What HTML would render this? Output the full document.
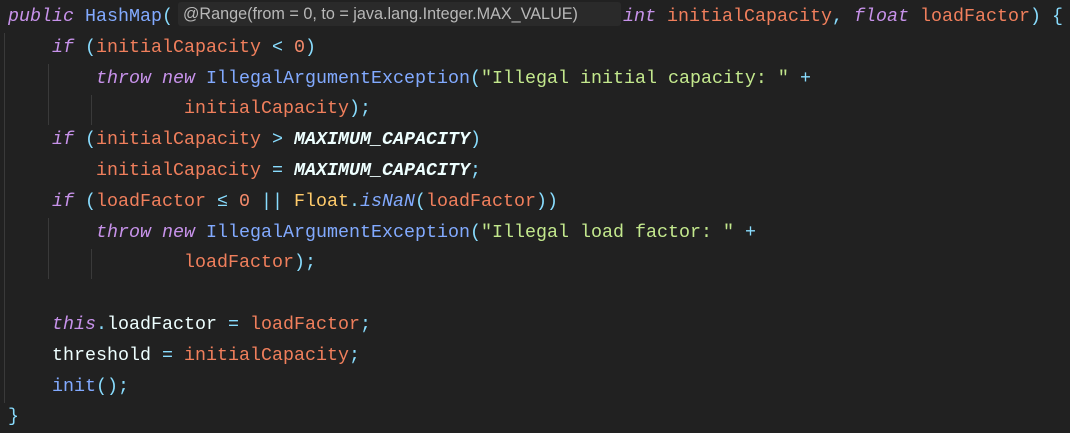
<!DOCTYPE html>
<html><head><style>
body{margin:0;background:#212121;width:1070px;height:430px;overflow:hidden;position:relative}
.code{position:absolute;left:8px;top:2px;font-family:"Liberation Mono",monospace;font-size:18.33px;line-height:30.8px;color:#eeffff;white-space:pre}
.k{color:#c792ea;font-style:italic}
.c{color:#82aaff}
.p{color:#89ddff}
.v{color:#f07f5c}
.o{color:#f78c6c}
.s{color:#c3e88d}
.y{color:#ffcb6b}
.m{color:#eeffff;font-style:italic;font-weight:bold}
.fi{color:#82aaff;font-style:italic}
.hint{display:inline-block;width:443px;height:24px;line-height:24px;vertical-align:middle;background:#2a2a2a;color:#b8b8b8;font-family:"Liberation Sans",sans-serif;font-size:16.2px;padding-left:5px;box-sizing:border-box;border-radius:3px;margin:0 2px 0 5px;position:relative;top:-2px}
.g{position:absolute;width:1px;background:#3a3a3a}
</style></head><body>
<div class="g" style="left:4px;top:33px;height:370px"></div>
<div class="g" style="left:48px;top:64px;height:61px"></div>
<div class="g" style="left:91px;top:95px;height:30px"></div>
<div class="g" style="left:48px;top:218px;height:61px"></div>
<div class="g" style="left:91px;top:249px;height:30px"></div>
<div class="code"><span class="k">public</span> <span class="c">HashMap</span><span class="p">(</span><span class="hint">@Range(from = 0, to = java.lang.Integer.MAX_VALUE)</span><span class="k">int</span> <span class="v">initialCapacity</span><span class="p">,</span> <span class="k">float</span> <span class="v">loadFactor</span><span class="p">)</span> <span class="p">{</span>
    <span class="k">if</span> <span class="p">(</span><span class="v">initialCapacity</span> <span class="p">&lt;</span> <span class="o">0</span><span class="p">)</span>
        <span class="k">throw</span> <span class="k">new</span> <span class="c">IllegalArgumentException</span><span class="p">(</span><span class="s">"Illegal initial capacity: "</span> <span class="p">+</span>
                <span class="v">initialCapacity</span><span class="p">);</span>
    <span class="k">if</span> <span class="p">(</span><span class="v">initialCapacity</span> <span class="p">&gt;</span> <span class="m">MAXIMUM_CAPACITY</span><span class="p">)</span>
        <span class="v">initialCapacity</span> <span class="p">=</span> <span class="m">MAXIMUM_CAPACITY</span><span class="p">;</span>
    <span class="k">if</span> <span class="p">(</span><span class="v">loadFactor</span> <span class="p">≤</span> <span class="o">0</span> <span class="p">||</span> <span class="y">Float</span><span class="p">.</span><span class="fi">isNaN</span><span class="p">(</span><span class="v">loadFactor</span><span class="p">))</span>
        <span class="k">throw</span> <span class="k">new</span> <span class="c">IllegalArgumentException</span><span class="p">(</span><span class="s">"Illegal load factor: "</span> <span class="p">+</span>
                <span class="v">loadFactor</span><span class="p">);</span>

    <span class="k">this</span><span class="p">.</span>loadFactor <span class="p">=</span> <span class="v">loadFactor</span><span class="p">;</span>
    threshold <span class="p">=</span> <span class="v">initialCapacity</span><span class="p">;</span>
    <span class="c">init</span><span class="p">();</span>
<span class="p">}</span></div>
</body></html>
